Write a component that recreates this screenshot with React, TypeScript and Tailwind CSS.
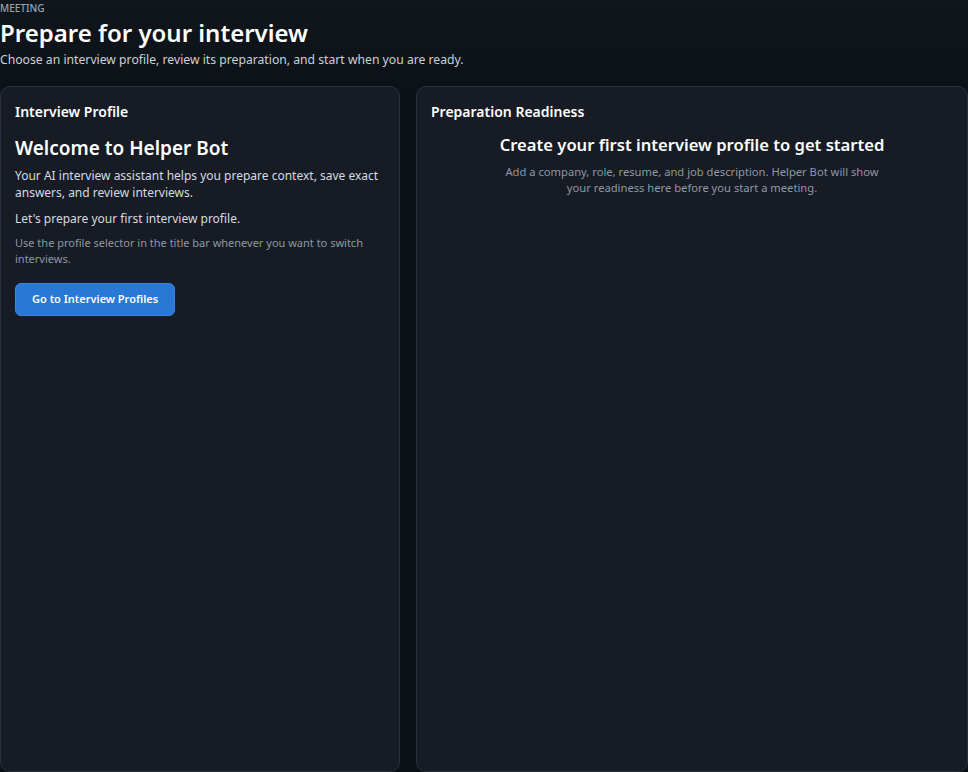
export default function App() {
  return (
    <div className="h-screen flex flex-col bg-[#0d1118] text-[#e6edf3] font-['Noto_Sans','Open_Sans',sans-serif] overflow-hidden">
      <header className="pt-[1px] pb-[17px] bg-gradient-to-b from-[#11151c] to-[#0d1118]">
        <p className="text-[10px] leading-[14px] font-medium uppercase text-[#9aa4b2]">
          Meeting
        </p>
        <h1 className="text-[24px] leading-[36px] font-semibold text-white">
          Prepare for your interview
        </h1>
        <p className="text-[12.2px] leading-[18px] text-[#c9d1d9]">
          Choose an interview profile, review its preparation, and start when you are ready.
        </p>
      </header>

      <div className="flex-1 grid grid-cols-[400px_1fr] gap-4">
        <section className="rounded-[10px] border border-[#2a313c] bg-[#161b24] px-[14px] py-[14px]">
          <h2 className="text-[14px] leading-[22px] font-semibold text-white">
            Interview Profile
          </h2>
          <h3 className="mt-[12px] text-[19px] leading-[26px] font-semibold text-white">
            Welcome to Helper Bot
          </h3>
          <p className="mt-[6px] text-[12px] leading-[17px] text-[#d4dbe3]">
            Your AI interview assistant helps you prepare context, save exact answers, and review interviews.
          </p>
          <p className="mt-[9px] text-[12px] leading-[17px] text-[#d4dbe3]">
            Let's prepare your first interview profile.
          </p>
          <p className="mt-[8px] text-[11px] leading-[16px] text-[#8e99a6]">
            Use the profile selector in the title bar whenever you want to switch interviews.
          </p>
          <button className="mt-[16px] h-[33px] px-4 rounded-md border border-[#3c86e0] bg-[#2a78d6] text-[11px] font-semibold text-white">
            Go to Interview Profiles
          </button>
        </section>

        <section className="rounded-[10px] border border-[#2a313c] bg-[#161b24] px-[14px] py-[14px]">
          <h2 className="text-[14px] leading-[22px] font-semibold text-white">
            Preparation Readiness
          </h2>
          <div className="mt-[10px] flex flex-col items-center text-center">
            <h3 className="text-[16.6px] leading-[24px] font-semibold text-white">
              Create your first interview profile to get started
            </h3>
            <p className="mt-[7px] max-w-[390px] text-[11.2px] leading-[16px] text-[#8e99a6]">
              Add a company, role, resume, and job description. Helper Bot will show your readiness here before you start a meeting.
            </p>
          </div>
        </section>
      </div>
    </div>
  );
}
